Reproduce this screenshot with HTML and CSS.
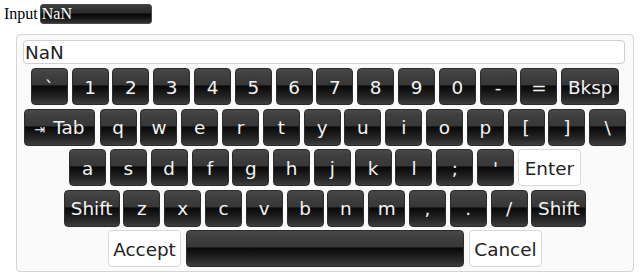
FILE: index.html
```html
<!DOCTYPE html>
<html>
<head>
<meta charset="utf-8">
<link rel="stylesheet" href="styles.css">
</head>
<body>
<div class="top">
  <span class="label">Input</span>
  <input class="field" type="text" value="NaN">
</div>
<div class="keyboard">
  <input class="preview" type="text" value="NaN">
  <div class="row">
    <span class="key">`</span><span class="key">1</span><span class="key">2</span><span class="key">3</span><span class="key">4</span><span class="key">5</span><span class="key">6</span><span class="key">7</span><span class="key">8</span><span class="key">9</span><span class="key">0</span><span class="key">-</span><span class="key">=</span><span class="key bksp">Bksp</span>
  </div>
  <div class="row">
    <span class="key tab"><span class="arrow">⇥</span>Tab</span><span class="key">q</span><span class="key">w</span><span class="key">e</span><span class="key">r</span><span class="key">t</span><span class="key">y</span><span class="key">u</span><span class="key">i</span><span class="key">o</span><span class="key">p</span><span class="key">[</span><span class="key">]</span><span class="key">\</span>
  </div>
  <div class="row">
    <span class="key">a</span><span class="key">s</span><span class="key">d</span><span class="key">f</span><span class="key">g</span><span class="key">h</span><span class="key">j</span><span class="key">k</span><span class="key">l</span><span class="key">;</span><span class="key">'</span><span class="key light enter">Enter</span>
  </div>
  <div class="row">
    <span class="key shift">Shift</span><span class="key">z</span><span class="key">x</span><span class="key">c</span><span class="key">v</span><span class="key">b</span><span class="key">n</span><span class="key">m</span><span class="key">,</span><span class="key">.</span><span class="key">/</span><span class="key shift r">Shift</span>
  </div>
  <div class="row last">
    <span class="key light action">Accept</span><span class="key space"></span><span class="key light action">Cancel</span>
  </div>
</div>
</body>
</html>
```

FILE: styles.css
```css
html, body {
  margin: 0;
  padding: 0;
  background: #ffffff;
}
body {
  padding: 4px;
  font-family: "Liberation Serif", serif;
  font-size: 16px;
}
.top {
  display: flex;
  align-items: baseline;
  gap: 2px;
  height: 20px;
}
.label {
  color: #000;
}
.field {
  box-sizing: border-box;
  width: 112px;
  height: 20px;
  margin: 0;
  padding: 0 1px;
  border: 1px solid #4a4a4a;
  border-radius: 3px;
  font-family: "Liberation Serif", serif;
  font-size: 16px;
  color: #ffffff;
  background: linear-gradient(to bottom, #3c3c3c 0%, #2a2a2a 45%, #050505 50%, #141414 70%, #333333 100%);
  outline: none;
}
.keyboard {
  box-sizing: border-box;
  width: 618px;
  height: 238px;
  margin: 10px 0 0 12px;
  padding: 5px 0 4px 6px;
  border: 1px solid #d4d4d4;
  border-radius: 4px;
  background: #fafafa;
  display: flex;
  flex-direction: column;
  gap: 3.5px;
  font-family: "DejaVu Sans", Verdana, sans-serif;
}
.preview {
  box-sizing: border-box;
  width: 602px;
  height: 24px;
  margin: 0 0 0.5px 0;
  padding: 1px 1px 0 1px;
  border: 1px solid #cfcfcf;
  border-radius: 4px;
  background: #ffffff;
  font-family: "DejaVu Sans", Verdana, sans-serif;
  font-size: 18.4px;
  color: #222;
  outline: none;
}
.row {
  display: flex;
  justify-content: center;
  gap: 3.8px;
  height: 37px;
  margin-left: -6px;
}
.row.last {
  gap: 5px;
}
.key {
  box-sizing: border-box;
  width: 37px;
  height: 37px;
  display: flex;
  align-items: center;
  justify-content: center;
  padding-top: 3px;
  border: 1px solid #2c2c2c;
  border-radius: 4px;
  background: linear-gradient(to bottom, #484848 0%, #3e3e3e 20%, #373737 46%, #080808 48%, #121212 60%, #2a2a2a 85%, #3e3e3e 100%);
  color: #f2f2f2;
  font-size: 18.4px;
  line-height: 1;
  white-space: nowrap;
}
.key.bksp { width: 58px; }
.key.tab { width: 71px; margin-right: 1px; }
.key.enter { width: 63px; }
.key.shift { width: 56px; }
.key.shift.r { width: 55px; }
.key.space { width: 278px; }
.key.action { width: 73px; }
.key.light {
  background: #ffffff;
  border: 1px solid #d9d9d9;
  color: #222222;
}
.arrow {
  font-size: 13px;
  margin-right: 8px;
  padding-top: 2px;
}
```
